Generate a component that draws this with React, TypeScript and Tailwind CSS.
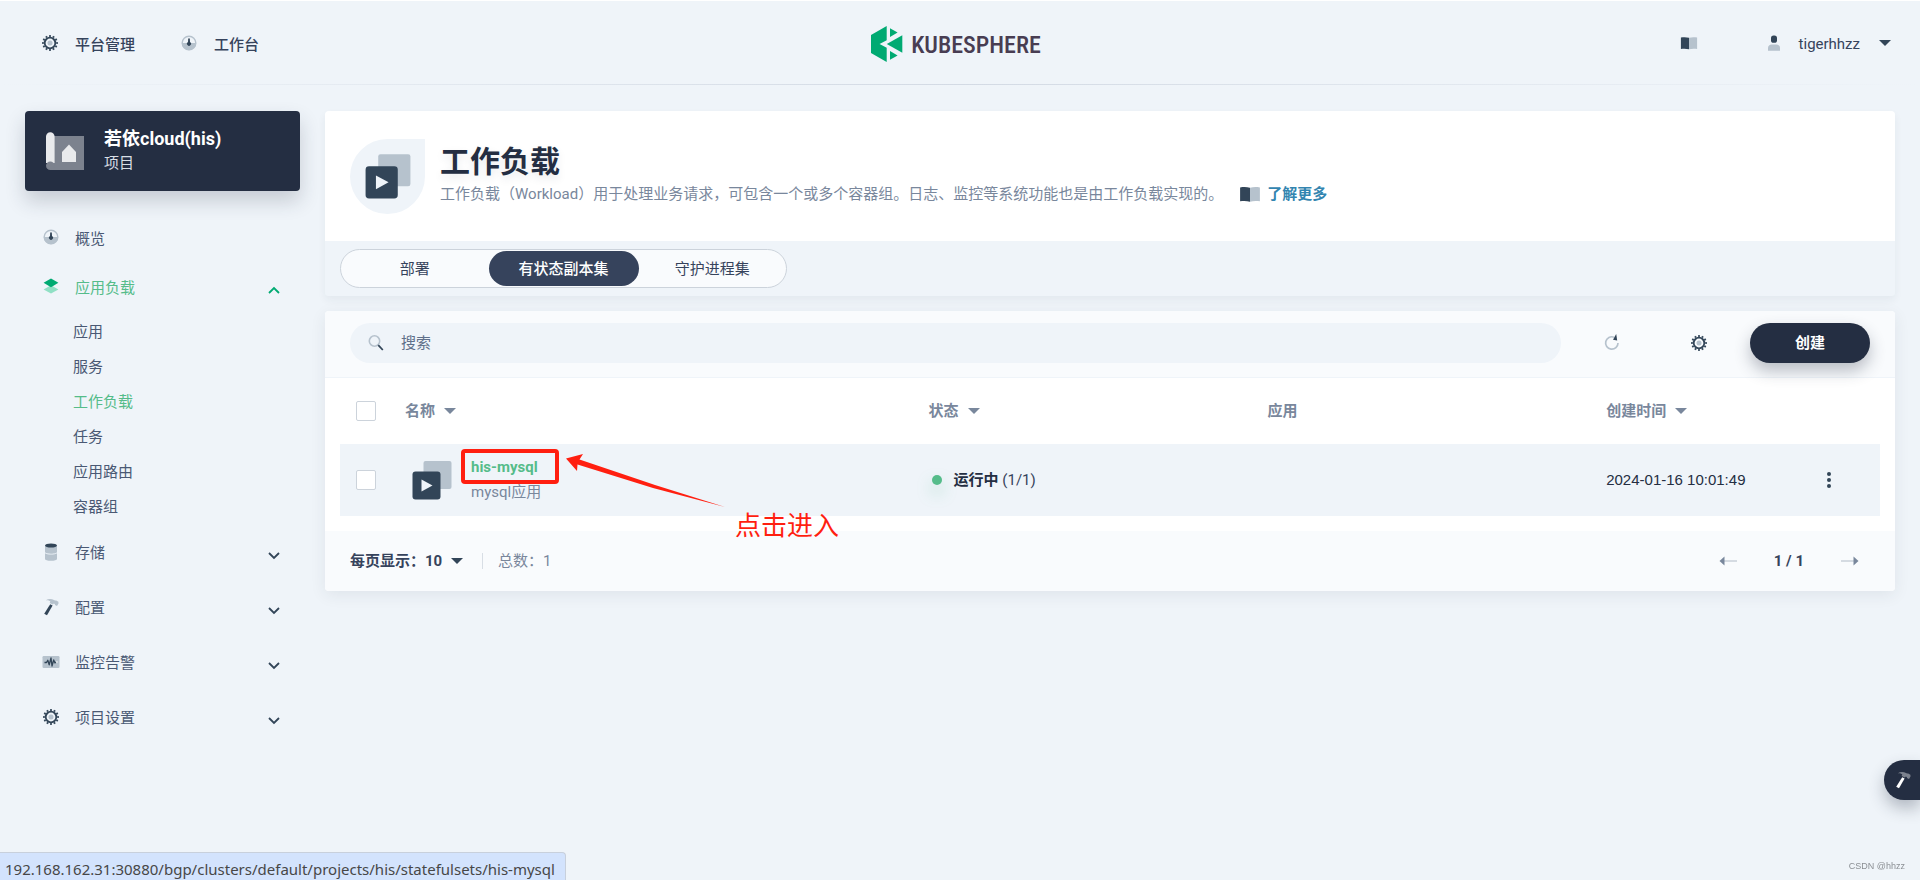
import React, { useState } from "react";

type IconProps = { className?: string };

const DARK = "#324558";
const LIGHT = "#b6c2cd";

function GearIcon({ className = "size-5" }: IconProps) {
  return (
    <svg viewBox="0 0 20 20" className={className} fill="none" aria-hidden="true">
      <circle cx="10" cy="10" r="5.3" stroke={DARK} strokeWidth="1.8" />
      <circle cx="10" cy="10" r="7" stroke={DARK} strokeWidth="1.8" pathLength={24} strokeDasharray="1 1" strokeDashoffset="0.5" />
      <circle cx="10" cy="10" r="2.5" fill={LIGHT} />
    </svg>
  );
}

function DashboardIcon({ className = "size-5" }: IconProps) {
  return (
    <svg viewBox="0 0 20 20" className={className} fill="none" aria-hidden="true">
      <circle cx="10" cy="10" r="6.8" stroke={LIGHT} strokeWidth="1.4" />
      <path d="M2.8 10a7.2 7.2 0 0 0 14.4 0z" fill={LIGHT} />
      <path d="M10 5.2 11 9a2 2 0 1 1-2 0z" fill={DARK} />
      <path d="M9.2 5.4h1.6v5H9.2z" fill={DARK} />
    </svg>
  );
}

function LayersIcon({ className = "size-5" }: IconProps) {
  return (
    <svg viewBox="0 0 20 20" className={className} aria-hidden="true">
      <path d="M10 9.2 17.4 13.4 10 17.6 2.6 13.4z" fill="#90e0c5" />
      <path d="M10 2.4 17.4 6.8 10 11.2 2.6 6.8z" fill="#00aa72" />
    </svg>
  );
}

function StorageIcon({ className = "size-5" }: IconProps) {
  return (
    <svg viewBox="0 0 20 20" className={className} aria-hidden="true">
      <path d="M4 3.5h12V10c0 1-2.700 1.700-6 1.700S4 11 4 10z" fill={LIGHT} />
      <path d="M4 11.200c1 .9 3.400 1.400 6 1.400s5-.5 6-1.400V17c0 1-2.700 1.800-6 1.800S4 18 4 17z" fill={LIGHT} />
      <ellipse cx="10" cy="3.500" rx="6" ry="2" fill={DARK} />
    </svg>
  );
}

function HammerIcon({ className = "size-5", head = LIGHT, handle = DARK }: IconProps & { head?: string; handle?: string }) {
  return (
    <svg viewBox="0 0 20 20" className={className} aria-hidden="true">
      <path d="M9.200 7.200 11.600 8.500 6 18.300 3.200 16.800z" fill={handle} />
      <path d="M4.800 3.200C7.500 1.600 10.500 1.700 13 3l1 .6 1.200-.2 2.200 1.400.1 1.800-1.500 2.400-2-.9-.2-1.200-1-.5-.9 1.200-3.200-1.700.6-1.600C8.200 3.300 6.600 3 4.800 3.200z" fill={head} />
    </svg>
  );
}

function MonitorIcon({ className = "size-5" }: IconProps) {
  return (
    <svg viewBox="0 0 20 20" className={className} fill="none" aria-hidden="true">
      <rect x="1.500" y="4" width="17" height="12" rx="1.200" fill={LIGHT} />
      <path d="M3.500 10.500h2l1.300-2.200 1.400 4.500L10 6l1 8 1.700-6 1.300 3 .8-1.200" stroke={DARK} strokeWidth="1.300" strokeLinejoin="round" />
      <path d="M15 10h1.800" stroke="#fff" strokeWidth="1.200" />
    </svg>
  );
}

function BookIcon({ className = "size-5" }: IconProps) {
  return (
    <svg viewBox="0 0 20 20" className={className} aria-hidden="true">
      <path d="M1 4c3.200-.6 6.200-.5 9 .3V17c-2.800-.8-5.800-.9-9-.4z" fill={DARK} />
      <path d="M19 4c-3.200-.6-6.200-.5-9 .3V17c2.800-.8 5.800-.9 9-.4z" fill={LIGHT} />
    </svg>
  );
}

function UserIcon({ className = "size-5" }: IconProps) {
  return (
    <svg viewBox="0 0 20 20" className={className} aria-hidden="true">
      <path d="M4 17.800v-3c0-2 1.600-3.400 3.600-3.400h4.800c2 0 3.600 1.400 3.600 3.400v3z" fill={LIGHT} />
      <rect x="7" y="2.400" width="6" height="7.400" rx="2.600" fill={DARK} />
    </svg>
  );
}

function SearchIcon({ className = "size-5" }: IconProps) {
  return (
    <svg viewBox="0 0 20 20" className={className} fill="none" aria-hidden="true">
      <circle cx="8.500" cy="8" r="5.200" stroke={LIGHT} strokeWidth="1.600" />
      <path d="M12.300 12.200 16.800 17" stroke={DARK} strokeWidth="1.800" />
    </svg>
  );
}

function RefreshIcon({ className = "size-5" }: IconProps) {
  return (
    <svg viewBox="0 0 20 20" className={className} fill="none" aria-hidden="true">
      <path d="M12 4.200A6.200 6.200 0 1 0 16 10" stroke={LIGHT} strokeWidth="1.700" />
      <path d="M14.200 1 15.200 7.400 11 6.800z" fill={DARK} />
    </svg>
  );
}

function ProjectIcon() {
  return (
    <svg viewBox="0 0 40 40" className="size-10" aria-hidden="true">
      <path d="M9 5h30v34H5z" fill="#7c828e" />
      <path d="M17 21l7-7.500 7 7.500v10H17z" fill="#e9eaec" />
      <path d="M1 5.500a4.300 4.300 0 0 1 8.600 0V32H1z" fill="#e9eaec" />
      <circle cx="5.300" cy="34.700" r="4.300" fill="#7c828e" />
    </svg>
  );
}

function WorkloadIcon({ className = "size-10" }: IconProps) {
  return (
    <svg viewBox="0 0 40 40" className={className} aria-hidden="true">
      <rect x="11.500" y="1" width="28" height="28" rx="2" fill={LIGHT} />
      <rect x="0.500" y="11.500" width="28" height="28" rx="3" fill={DARK} />
      <path d="M9.500 19.500 20.500 25.500 9.500 31.500z" fill="#eff4f9" />
    </svg>
  );
}

function Caret({ className = "fill-[#324558]" }: IconProps) {
  return (
    <svg viewBox="0 0 12 6" className={"h-1.5 w-3 " + className} aria-hidden="true">
      <path d="M0 0h12L6 6z" />
    </svg>
  );
}

function Chevron({ up = false }: { up?: boolean }) {
  return (
    <svg viewBox="0 0 12 8" className="h-2 w-3" fill="none" strokeWidth="1.800" aria-hidden="true">
      <path d={up ? "M1 7 6 2l5 5" : "M1 1l5 5 5-5"} stroke={up ? "#00aa72" : DARK} />
    </svg>
  );
}

function PageArrow({ right = false }: { right?: boolean }) {
  return (
    <svg viewBox="0 0 18 12" className="h-3 w-[18px]" aria-hidden="true">
      <path d={right ? "M0 5.200h13v1.600H0z" : "M5 5.200h13v1.600H5z"} fill="#ccd3db" />
      <path d={right ? "M12.500 1.500 17.500 6l-5 4.500z" : "M5.500 1.500.5 6l5 4.500z"} fill="#79879c" />
    </svg>
  );
}

function Logo() {
  return (
    <a href="#home" className="flex items-center gap-2 pt-0.5 pr-2" aria-label="KubeSphere">
      <svg viewBox="0 0 32 36" className="h-9 w-8" fill="#00aa72" aria-hidden="true">
        <path d="M15.700 0v14.200L8.600 18l7.100 3.800V36L0 27V9z" />
        <path d="M19 2.200 26.600 6.600 19 11z" />
        <path d="M31.300 9.200v17.600L15.800 18z" />
        <path d="M19 25l7.600 4.400L19 33.800z" />
      </svg>
      <span className="pt-0.5 font-['Roboto_Condensed','Liberation_Sans_Narrow',Roboto,sans-serif] text-2xl leading-9 font-medium text-[#483d52]">
        KUBESPHERE
      </span>
    </a>
  );
}

const workloadLinks = ["应用", "服务", "工作负载", "任务", "应用路由", "容器组"];

const groups = [
  { label: "存储", Icon: StorageIcon },
  { label: "配置", Icon: HammerIcon },
  { label: "监控告警", Icon: MonitorIcon },
  { label: "项目设置", Icon: GearIcon },
];

const tabs = ["部署", "有状态副本集", "守护进程集"];

function Header() {
  return (
    <header className="border-t border-white">
      <div className="grid h-[83px] grid-cols-[1fr_auto_1fr] items-center px-[29px] text-[#36435c]">
        <nav className="flex items-center gap-11 pl-[11px] font-medium">
          <a href="#platform" className="flex items-center gap-[15px]">
            <GearIcon />
            <span className="pt-1">平台管理</span>
          </a>
          <a href="#workbench" className="flex items-center gap-[15px]">
            <DashboardIcon />
            <span className="pt-1">工作台</span>
          </a>
        </nav>
        <Logo />
        <div className="flex items-center justify-end gap-[66px]">
          <a href="#docs" aria-label="文档">
            <BookIcon className="size-[18px]" />
          </a>
          <button type="button" className="flex items-center">
            <UserIcon />
            <span className="pt-0.5 pr-[19px] pl-[15px]">tigerhhzz</span>
            <Caret />
          </button>
        </div>
      </div>
      <div className="h-px bg-linear-to-r from-transparent via-[#d3dae4] to-transparent" />
    </header>
  );
}

function Sidebar() {
  return (
    <aside className="w-[275px] shrink-0">
      <button type="button" className="flex h-20 w-full items-center gap-[19px] rounded bg-[#242e42] pl-5 text-left shadow-[0_10px_20px_rgba(36,46,66,0.2)]">
        <ProjectIcon />
        <span className="flex flex-col">
          <span className="text-lg leading-6 font-bold text-white">若依cloud(his)</span>
          <span className="leading-6 text-[#d8dee5]">项目</span>
        </span>
      </button>
      <nav className="mt-[21px] pr-5 pl-4 text-[#4a5974]">
        <a href="#overview" className="flex h-[49px] items-center gap-3.5">
          <DashboardIcon />
          <span className="pt-1">概览</span>
        </a>
        <button type="button" aria-expanded="true" className="flex h-[49px] w-full items-center gap-3.5 text-[#55bc8a]">
          <LayersIcon />
          <span className="flex-1 pt-1 text-left">应用负载</span>
          <span className="pt-2">
            <Chevron up />
          </span>
        </button>
        <ul className="mt-1 pl-8">
          {workloadLinks.map((label) => (
            <li key={label}>
              <a
                href="#workloads"
                className={"flex h-[35px] items-center " + (label === "工作负载" ? "text-[#55bc8a]" : "")}
              >
                {label}
              </a>
            </li>
          ))}
        </ul>
        {groups.map(({ label, Icon }) => (
          <button key={label} type="button" aria-expanded="false" className="flex h-[55px] w-full items-center gap-3.5">
            <Icon />
            <span className="flex-1 pt-0.5 text-left">{label}</span>
            <span className="pt-2">
              <Chevron />
            </span>
          </button>
        ))}
      </nav>
    </aside>
  );
}

function Banner() {
  const [active, setActive] = useState("有状态副本集");
  return (
    <section className="overflow-hidden rounded shadow-[0_4px_8px_rgba(36,46,66,0.06)]">
      <div className="flex h-[130px] items-center gap-[15px] bg-white px-[25px]">
        <div className="flex size-[75px] items-center justify-center rounded-full rounded-tr-none bg-[#eff4f9]">
          <WorkloadIcon className="size-[46px]" />
        </div>
        <div className="flex flex-col gap-0.5 pb-0.5">
          <h1 className="text-[30px] leading-9 font-bold text-[#242e42] [text-shadow:0_4px_8px_rgba(36,46,66,0.1)]">工作负载</h1>
          <p className="flex items-center leading-6 text-[#79879c]">
            <span>工作负载（Workload）用于处理业务请求，可包含一个或多个容器组。日志、监控等系统功能也是由工作负载实现的。</span>
            <a href="#learn" className="ml-4 flex items-center gap-1.5 font-bold text-[#3385b0]">
              <BookIcon className="size-[22px]" />
              了解更多
            </a>
          </p>
        </div>
      </div>
      <div className="flex h-[55px] items-center bg-[#eff4f9] px-[15px]">
        <div role="tablist" className="flex w-[447px] rounded-full border border-[#ccd3db] bg-[#f9fbfd] py-px">
          {tabs.map((tab) => (
            <button
              key={tab}
              type="button"
              role="tab"
              aria-selected={tab === active}
              onClick={() => setActive(tab)}
              className={
                "h-[35px] rounded-full " +
                (tab === active ? "w-[150px] bg-[#36435c] font-medium text-white" : "flex-1 text-[#36435c]")
              }
            >
              {tab}
            </button>
          ))}
        </div>
      </div>
    </section>
  );
}

function SortHeader({ children }: { children: React.ReactNode }) {
  return (
    <button type="button" className="flex items-center gap-[9px] font-bold">
      {children}
      <Caret className="fill-[#79879c]" />
    </button>
  );
}

function Check({ label }: { label: string }) {
  return (
    <input
      type="checkbox"
      aria-label={label}
      className="block size-5 appearance-none rounded-xs border border-[#ccd3db] bg-white checked:bg-[#55bc8a]"
    />
  );
}

function Annotation() {
  return (
    <div className="pointer-events-none absolute top-0 left-0 text-[#ff1f10]">
      <div className="absolute -top-1.5 left-[49px] h-[35px] w-[98px] rounded-sm border-4 border-[#ff1f10]" />
      <svg viewBox="0 0 160 54" className="absolute -top-px left-[153px] h-[54px] w-40 max-w-none" aria-hidden="true">
        <path d="M1 4.500 18 0 14.500 5.500 90 31 160 53 88 34 12.500 10.500 12 17z" fill="#ff1f10" />
      </svg>
      <span className="absolute top-[51px] left-[323px] text-[26px] leading-10 whitespace-nowrap">点击进入</span>
    </div>
  );
}

function Workloads() {
  return (
    <section className="rounded bg-white shadow-[0_4px_16px_rgba(36,46,66,0.08)]">
      <div className="flex h-[67px] items-center rounded-t border-b border-[#eff4f9] bg-[#f9fbfd] px-[25px] pb-0.5">
        <label className="flex h-10 flex-1 items-center gap-[15px] rounded-full bg-[#eff4f9] pl-4">
          <SearchIcon />
          <input
            type="search"
            aria-label="搜索"
            placeholder="搜索"
            className="h-full flex-1 bg-transparent outline-none placeholder:text-[#5f708a]"
          />
        </label>
        <button type="button" aria-label="刷新" className="ml-[41px]">
          <RefreshIcon />
        </button>
        <button type="button" aria-label="设置" className="mr-[41px] ml-[67px]">
          <GearIcon />
        </button>
        <button type="button" className="h-10 w-[120px] rounded-full bg-[#242e42] font-bold text-white shadow-[0_8px_16px_rgba(36,46,66,0.3)]">
          创建
        </button>
      </div>

      <div className="px-[15px] pb-[15px]">
        <table className="w-full table-fixed text-left">
          <colgroup>
            <col className="w-14" />
            <col className="w-[34%]" />
            <col className="w-[22%]" />
            <col className="w-[22%]" />
            <col />
            <col className="w-[102px]" />
          </colgroup>
          <thead className="text-[#79879c]">
            <tr className="h-[66px]">
              <th className="pl-4">
                <Check label="全选" />
              </th>
              <th className="px-[9px]">
                <SortHeader>名称</SortHeader>
              </th>
              <th className="px-[9px]">
                <SortHeader>状态</SortHeader>
              </th>
              <th className="px-[9px]">应用</th>
              <th className="px-[9px]">
                <SortHeader>创建时间</SortHeader>
              </th>
              <th aria-label="操作" />
            </tr>
          </thead>
          <tbody>
            <tr className="h-[72px] bg-[#eff4f9]">
              <td className="pl-4">
                <Check label="选择 his-mysql" />
              </td>
              <td className="pr-2 pl-4">
                <div className="relative flex items-center gap-[19px]">
                  <WorkloadIcon />
                  <div className="flex flex-col">
                    <a href="#his-mysql" className="leading-[25px] font-bold text-[#55bc8a]">
                      his-mysql
                    </a>
                    <span className="leading-[25px] text-[#79879c]">mysql应用</span>
                  </div>
                  <Annotation />
                </div>
              </td>
              <td className="px-[9px]">
                <div className="flex items-center gap-3 pl-[3px] text-[#36435c]">
                  <span className="size-2.5 rounded-full bg-[#55bc8a] shadow-[0_8px_16px_rgba(85,188,138,0.4)]" />
                  <span>
                    <strong className="font-bold text-[#242e42]">运行中</strong> (1/1)
                  </span>
                </div>
              </td>
              <td />
              <td className="px-[9px] font-['Liberation_Sans',sans-serif] text-[#242e42]">2024-01-16 10:01:49</td>
              <td>
                <button type="button" aria-label="更多操作" className="mx-auto block">
                  <svg viewBox="0 0 20 20" className="size-5" fill={DARK} aria-hidden="true">
                    <circle cx="10" cy="4" r="2" />
                    <circle cx="10" cy="10" r="2" />
                    <circle cx="10" cy="16" r="2" />
                  </svg>
                </button>
              </td>
            </tr>
          </tbody>
        </table>
      </div>

      <footer className="flex h-[60px] items-center rounded-b bg-[#f9fbfd] px-[25px] text-[#79879c]">
        <label className="flex items-center font-bold text-[#36435c]">
          每页显示：
          <span className="grid items-center">
            <select className="col-start-1 row-start-1 w-[38px] appearance-none bg-transparent font-bold outline-none">
              <option>10</option>
              <option>20</option>
              <option>50</option>
            </select>
            <span className="pointer-events-none col-start-1 row-start-1 justify-self-end">
              <Caret />
            </span>
          </span>
        </label>
        <span className="ml-[19px] border-l border-[#d8dee5] pl-[15px] leading-4">总数：1</span>
        <div className="ml-auto flex items-center gap-[37px] pr-[11px]">
          <button type="button" aria-label="上一页">
            <PageArrow />
          </button>
          <span className="font-bold text-[#36435c]">1 / 1</span>
          <button type="button" aria-label="下一页">
            <PageArrow right />
          </button>
        </div>
      </footer>
    </section>
  );
}

export default function App() {
  return (
    <div className="min-h-screen bg-[#eff4f9] font-[Roboto,'Noto_Sans_CJK_SC',sans-serif] text-[15px] leading-5">
      <Header />
      <div className="flex gap-[25px] px-[25px] pt-[26px] pb-20">
        <Sidebar />
        <main className="flex min-w-0 flex-1 flex-col gap-[15px]">
          <Banner />
          <Workloads />
        </main>
      </div>

      <button
        type="button"
        aria-label="工具箱"
        className="fixed right-0 bottom-20 flex h-10 w-9 items-center rounded-l-full bg-[#242e42] pl-[9px] shadow-[0_8px_16px_rgba(36,46,66,0.3)]"
      >
        <HammerIcon head="#7c828e" handle="#ffffff" />
      </button>
      <span className="fixed right-[15px] bottom-1 font-['Liberation_Sans',sans-serif] text-[9px] text-[#8b8f94]">CSDN @hhzz</span>
      <div className="fixed bottom-0 left-0 rounded-tr border-t border-r border-[#c8d0dc] bg-[#d3e3fd] pt-[5px] pr-2.5 pl-[5px] font-['Noto_Sans',sans-serif] text-[15px] leading-[22px] text-[#474747]">
        192.168.162.31:30880/bgp/clusters/default/projects/his/statefulsets/his-mysql
      </div>
    </div>
  );
}
